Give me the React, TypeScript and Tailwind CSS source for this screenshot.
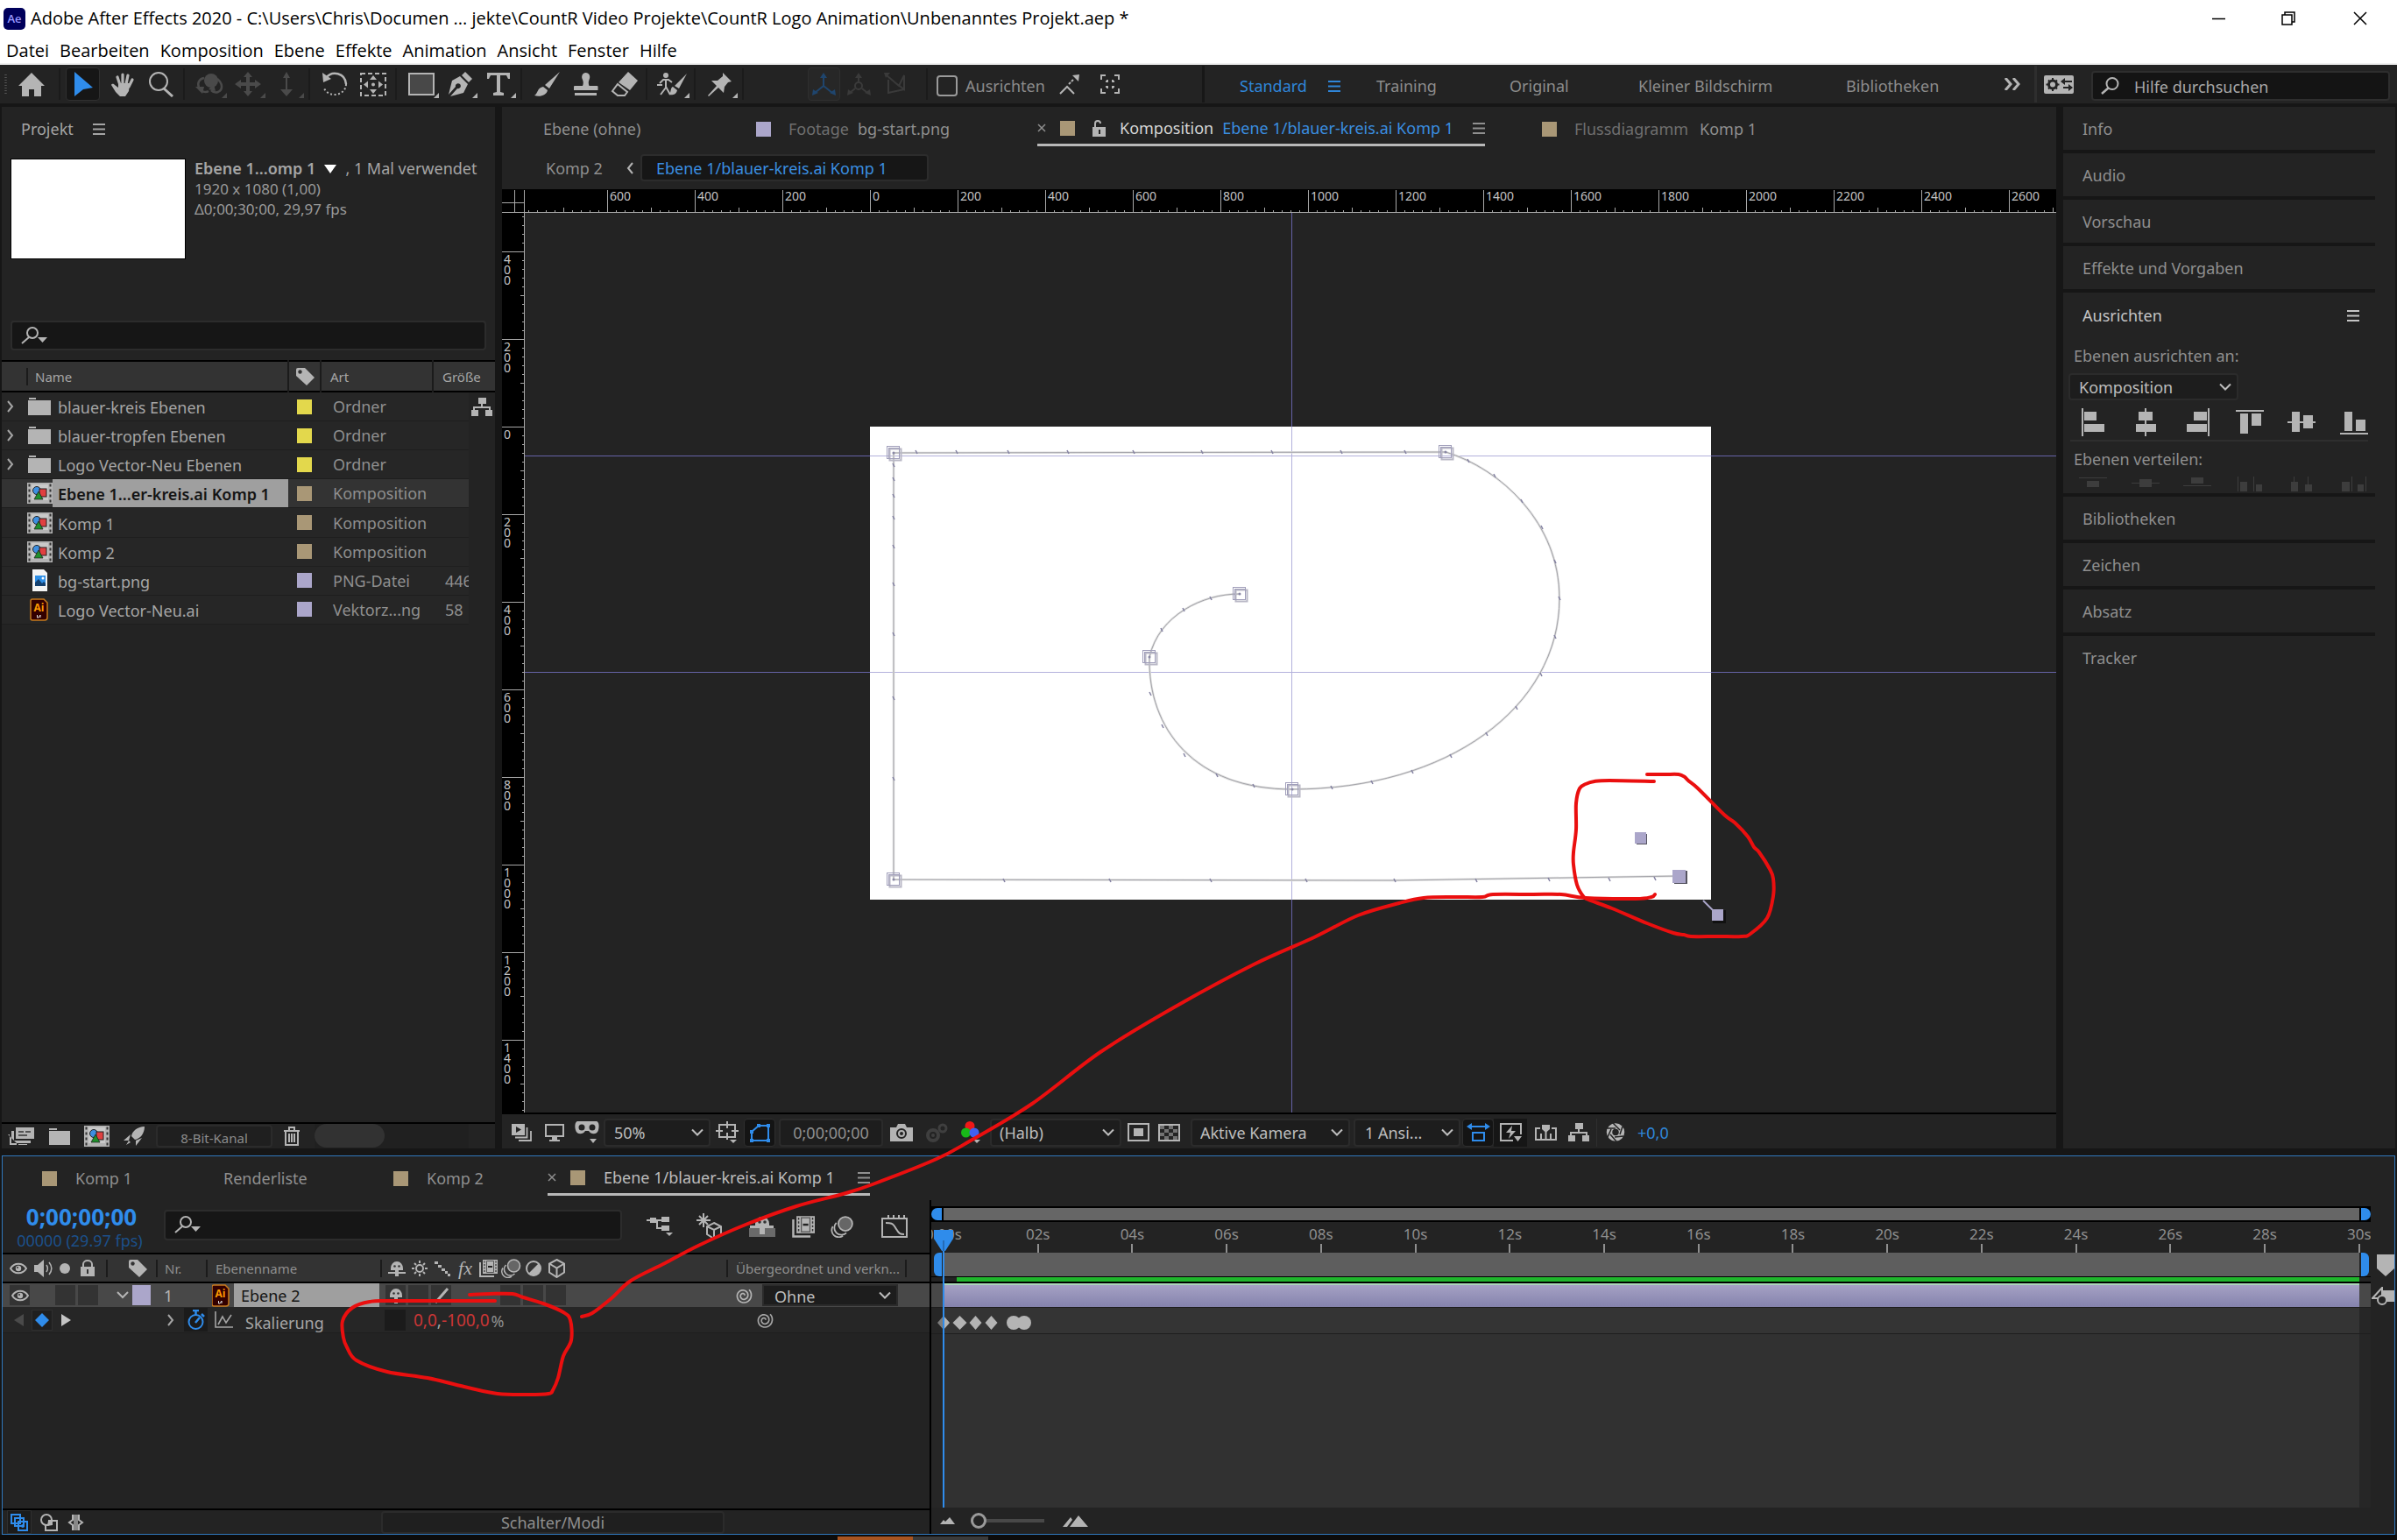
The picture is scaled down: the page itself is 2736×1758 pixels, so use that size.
import React from 'react';
import clsx from 'clsx';

interface IcProps {
  w: number;
  h: number;
  className?: string;
  children: React.ReactNode;
}

const Ic: React.FC<IcProps> = ({ w, h, className, children }) => (
  <svg width={w} height={h} viewBox={`0 0 ${w} ${h}`} fill="currentColor" className={clsx('shrink-0', className)} aria-hidden="true">
    {children}
  </svg>
);

const line = { fill: 'none', stroke: 'currentColor', strokeWidth: 2 };

/* ---------- shared icons ---------- */

const Burger = () => (
  <Ic w={14} h={13}><path d="M0 1h14M0 6.500h14M0 12h14" {...line} strokeWidth={1.800} /></Ic>
);
const Chevron: React.FC<{ className?: string }> = ({ className }) => (
  <Ic w={14} h={9} className={className}><path d="M1 1l6 6 6-6" {...line} /></Ic>
);
const ChevronRight = () => (
  <Ic w={8} h={14}><path d="M1 1l5 6-5 6" {...line} /></Ic>
);
const SearchDrop = () => (
  <Ic w={30} h={20}>
    <circle cx="13" cy="7" r="6" {...line} />
    <path d="M9 12l-8 7" {...line} />
    <path d="M19 12h11l-5.500 6z" />
  </Ic>
);
const CompIcon = () => (
  <Ic w={29} h={24}>
    <path d="M0 0h29v24H0z" fill="#b4b4b4" />
    <path d="M2.500 1.500v21M26.500 1.500v21" stroke="#333" strokeWidth="2" strokeDasharray="3 3" />
    <rect x="5" y="2" width="19" height="18" fill="#c9c9c9" />
    <circle cx="11" cy="9" r="4.500" fill="#3d8fe0" stroke="#222" />
    <rect x="14" y="7" width="8" height="9" fill="#e04040" stroke="#222" />
    <path d="M13 10l5 9H8z" fill="#1f8f2b" stroke="#222" strokeWidth=".8" />
  </Ic>
);
const FolderIcon = () => (
  <Ic w={26} h={20}><path d="M1 0h8v2H1zM0 3h26v17H0z" fill="#b4b4b4" /></Ic>
);
const PngIcon = () => (
  <Ic w={29} h={25}>
    <path d="M6 0h13l4 4v21H6z" fill="#f4f4f4" />
    <rect x="9" y="7" width="12" height="12" fill="#2f8fe6" />
    <path d="M9 19v-4l4-4 4 5 2-2 2 2v3z" fill="#14406f" />
    <circle cx="18" cy="10" r="1.500" fill="#fff" />
  </Ic>
);
const AiIcon: React.FC<{ w?: number }> = ({ w = 29 }) => (
  <svg width={w} height={26} viewBox={w === 29 ? '0 0 29 26' : '4 0 21 26'} className="shrink-0" aria-hidden="true">
    <path d="M6 1h13l4 4v17a3 3 0 01-3 3H6a2 2 0 01-2-2V3a2 2 0 012-2z" fill="#330000" stroke="#c77a1c" strokeWidth="1.500" />
    <text x="13.500" y="15" textAnchor="middle" fontSize="12" fontWeight="700" fill="#ff9a00" fontFamily="Open Sans, sans-serif">Ai</text>
    <path d="M11.500 19v3h1.500l2-3v3" stroke="#ddd" fill="none" />
  </svg>
);
const TagIcon = () => (
  <Ic w={22} h={21}>
    <path d="M1 3a2 2 0 012-2h8l11 11-9 9L1 10z" />
    <circle cx="5.500" cy="5.500" r="2.200" fill="#333" />
  </Ic>
);
const Flow = () => (
  <Ic w={24} h={21}><path d="M8 0h9v7H8zM0 14h8v7H0zM16 14h8v7h-8zM11 7h2v3h9v4h-2v-2H4v2H2v-4h9z" /></Ic>
);
const EyeIcon = () => (
  <Ic w={20} h={14}>
    <path d="M1 7c4-7 14-7 18 0-4 7-14 7-18 0z" {...line} />
    <circle cx="10" cy="7" r="3.200" />
    <circle cx="9" cy="6" r="1" fill="#333" />
  </Ic>
);
const ShyIcon = () => (
  <Ic w={22} h={18}>
    <path d="M4 9a7 8 0 0114 0v2h-5v7H9v-7H4z" />
    <path d="M1 14h20" {...line} />
    <circle cx="8.500" cy="6.500" r="1.300" fill="#333" />
    <circle cx="13.500" cy="6.500" r="1.300" fill="#333" />
  </Ic>
);
const BlurIcon: React.FC<{ w?: number; h?: number }> = ({ w = 23, h = 22 }) => (
  <svg width={w} height={h} viewBox="0 0 23 22" fill="none" stroke="currentColor" strokeWidth="1.600" className="shrink-0" aria-hidden="true">
    <circle cx="14.500" cy="8" r="7" fill="#666" />
    <path d="M5.500 7a7 7 0 0010 10" />
    <path d="M2 10.500a7 7 0 0010 9.500" />
  </svg>
);
const FrameBlendIcon: React.FC<{ w?: number; h?: number }> = ({ w = 22, h = 20 }) => (
  <svg width={w} height={h} viewBox="0 0 22 20" fill="currentColor" className="shrink-0" aria-hidden="true">
    <path d="M5 0h17v16H5z" />
    <path d="M7 1.500v13M20 1.500v13" stroke="#333" strokeWidth="1.200" strokeDasharray="2 1.500" />
    <path d="M9.500 1.500h8v13h-8z" fill="none" stroke="#555" />
    <path d="M11 8h5" stroke="#222" strokeWidth="2" />
    <path d="M2 3v16h16" {...line} />
  </svg>
);
const CubeIcon = () => (
  <Ic w={21} h={22}><path d="M10.500 1L19 5.500v10L10.500 21 2 15.500v-10zM2 5.500l8.500 5 8.500-5M10.500 10.500V21" {...line} /></Ic>
);

// spiral of the parent pick whip, wound inwards from its top right end
const spiral = Array.from({ length: 49 }, (_, i) => {
  const a = -0.8 + (i / 48) * Math.PI * 4.2;
  const r = 9.5 - (i / 48) * 8;
  return `${(10.5 + r * Math.cos(a)).toFixed(1)},${(10 + r * Math.sin(a)).toFixed(1)}`;
}).join(' ');

const Swirl = () => (
  <Ic w={21} h={20}><polyline points={spiral} {...line} strokeWidth={1.700} /></Ic>
);

const Square: React.FC<{ className: string }> = ({ className }) => (
  <span className={clsx('block h-[17px] w-[17px] shrink-0', className)} />
);

interface PickProps {
  label: string;
  value: string;
  className?: string;
  selectClass?: string;
}

const Pick: React.FC<PickProps> = ({ label, value, className, selectClass }) => (
  <div className={clsx('relative shrink-0', className)}>
    <select
      aria-label={label}
      defaultValue={value}
      className={clsx('h-full w-full appearance-none rounded border-2 border-[#2b2b2b] bg-[#1d1d1d] text-[#bdbdbd] outline-none', selectClass)}
    >
      <option>{value}</option>
    </select>
    <Chevron className="pointer-events-none absolute right-2 top-1/2 -translate-y-1/2 text-[#bdbdbd]" />
  </div>
);

/* ---------- title and menu ---------- */

const menus = ['Datei', 'Bearbeiten', 'Komposition', 'Ebene', 'Effekte', 'Animation', 'Ansicht', 'Fenster', 'Hilfe'];

const TitleBar = () => (
  <header className="border-b-2 border-[#f0f0f0] bg-white font-['Open_Sans',sans-serif] text-[20px] text-black">
    <div className="flex h-[42px] items-center pl-1">
      <svg width="25" height="25" viewBox="0 0 25 25" aria-hidden="true">
        <rect width="25" height="25" rx="5" fill="#00005b" />
        <text x="12.500" y="17" textAnchor="middle" fontSize="13" fontWeight="600" fill="#9999ff" fontFamily="Open Sans, sans-serif">Ae</text>
      </svg>
      <h1 className="ml-[6px]">
        Adobe After Effects 2020 - C:\Users\Chris\Documen ... jekte\CountR Video Projekte\CountR Logo Animation\Unbenanntes Projekt.aep *
      </h1>
      <div className="ml-auto flex">
        <button aria-label="Minimieren" className="flex h-[38px] w-20 items-center justify-center">
          <Ic w={15} h={15}><path d="M0 7.500h15" {...line} strokeWidth={1.500} /></Ic>
        </button>
        <button aria-label="Wiederherstellen" className="flex h-[38px] w-20 items-center justify-center">
          <Ic w={16} h={16}><path d="M1 4h11v11H1zM4 4V1h11v11h-3" {...line} strokeWidth={1.500} /></Ic>
        </button>
        <button aria-label="Schließen" className="flex h-[38px] w-[84px] items-center justify-center">
          <Ic w={16} h={16}><path d="M1 1l14 14M15 1L1 15" {...line} strokeWidth={1.500} /></Ic>
        </button>
      </div>
    </div>
    <nav className="flex h-[30px] gap-3 pl-[7px] leading-8">
      {menus.map(m => <button key={m}>{m}</button>)}
    </nav>
  </header>
);

/* ---------- toolbar ---------- */

const Tool: React.FC<{ label: string; fly?: boolean; className?: string; children: React.ReactNode }> = ({ label, fly, className, children }) => (
  <button aria-label={label} className={clsx('relative flex h-[38px] w-11 shrink-0 items-center justify-center', className)}>
    {children}
    {fly && (
      <svg width="6" height="6" viewBox="0 0 6 6" className="absolute bottom-[3px] right-[2px]" aria-hidden="true"><path d="M6 0v6H0z" fill="currentColor" /></svg>
    )}
  </button>
);

const Sep: React.FC<{ className?: string }> = ({ className }) => (
  <span className={clsx('ml-[3px] h-9 w-2 shrink-0 border-l-2 border-[#1b1b1b]', className)} />
);

const Toolbar = () => (
  <div className="flex h-11 shrink-0 items-center bg-[#232323] text-[#b4b4b4]">
    <Ic w={8} h={22}><path d="M6.500 0v22" stroke="#555" strokeWidth="2.500" strokeDasharray="1 2" /></Ic>
    <Tool label="Startseite" className="w-[56px]">
      <Ic w={30} h={27}><path d="M15 0l15 15h-4v12h-8v-8h-6v8H4V15H0z" /></Ic>
    </Tool>
    <Sep className="ml-0" />
    <Tool label="Auswahl" className="w-[39px] rounded border border-[#303030] bg-[#161616] text-[#2f8ceb]">
      <Ic w={22} h={28}><path d="M1 0l21 18-11 2-10 8z" /></Ic>
    </Tool>
    <Tool label="Hand" className="ml-1">
      <Ic w={28} h={28}>
        <path d="M11 15l-3-9M14 14V3M18 14l2-10M21 17l4-8" stroke="currentColor" strokeWidth="3.200" strokeLinecap="round" />
        <path d="M9 13h13l-1 9-4 6h-6l-5-5-5-8c1-2 3-1 4 0l4 3z" />
      </Ic>
    </Tool>
    <Tool label="Zoom">
      <Ic w={30} h={29}><circle cx="12" cy="11" r="10" {...line} /><path d="M18 19l10 9" {...line} strokeWidth={3} /></Ic>
    </Tool>
    <Sep />
    <Tool label="Kamera drehen" fly className="text-[#4a4a4a]">
      <Ic w={32} h={26}>
        <circle cx="18" cy="9" r="8" />
        <path d="M10 6C4 7 2 12 4 17s8 6 11 4M25 7c6 5 7 12 1 15-3 1-6 0-8-2" {...line} strokeWidth={2.500} />
        <path d="M0 16h10l-2 8zM21 13l2 8-8-2z" />
      </Ic>
    </Tool>
    <Tool label="Kamera schwenken" fly className="text-[#4a4a4a]">
      <Ic w={30} h={28}><path d="M15 0l5 6h-3v6h6V9l7 5-7 5v-3h-6v6h3l-5 6-5-6h3v-6H7v3l-7-5 7-5v3h6V6h-3z" /></Ic>
    </Tool>
    <Tool label="Kamera Dolly" fly className="text-[#4a4a4a]">
      <Ic w={18} h={28}><path d="M9 0l4 7h-3v13h6l-7 8-7-8h6V7H5z" /></Ic>
    </Tool>
    <Sep className="ml-0" />
    <Tool label="Drehen">
      <Ic w={30} h={28}>
        <path d="M5 7c7-9 22-6 23 7" {...line} strokeWidth={2.500} />
        <path d="M28 14c0 7-6 12-13 12-6 0-10-3-12-7" {...line} strokeDasharray="2 2.500" />
        <path d="M1 1l1 11 9-4z" />
      </Ic>
    </Tool>
    <Tool label="Ausschnitt">
      <Ic w={30} h={27}>
        <path d="M1 1h28v25H1z" {...line} strokeDasharray="5 3" />
        <path d="M15 3l4 5h-8zM15 24l4-5h-8zM4 13.500l5-4v8zM26 13.500l-5-4v8z" />
        <circle cx="15" cy="13.500" r="2" />
      </Ic>
    </Tool>
    <Sep />
    <Tool label="Rechteck" fly>
      <Ic w={30} h={26}><path d="M1 1h28v24H1z" fill="#484848" stroke="currentColor" strokeWidth="2" /></Ic>
    </Tool>
    <Tool label="Zeichenstift" fly>
      <Ic w={28} h={28}>
        <path d="M20 0l8 8-4 4-8-8zM14 5l9 9-5 10-15 4 8-9a3 3 0 10-2-2L1 26 5 10z" />
      </Ic>
    </Tool>
    <Tool label="Text" fly>
      <Ic w={26} h={26}><path d="M0 0h26v7h-2l-2-4h-7v19l4 1v3H7v-3l4-1V3H4L2 7H0z" /></Ic>
    </Tool>
    <Sep />
    <Tool label="Pinsel">
      <Ic w={29} h={28}><path d="M29 0L17 19l-5-4zM10 17l5 4c-1 6-9 8-15 6 4-2 3-9 10-10z" /></Ic>
    </Tool>
    <Tool label="Kopierstempel">
      <Ic w={29} h={27}><path d="M14.500 0c4 0 6 4 4 8-1 2-1 5 0 7h9a1 1 0 011 1v4H1v-4a1 1 0 011-1h9c1-2 1-5 0-7-2-4 0-8 3.500-8zM2 23h25v3H2z" /></Ic>
    </Tool>
    <Tool label="Radiergummi">
      <Ic w={31} h={28}>
        <path d="M20 0l11 10-9 11L9 12z" />
        <path d="M8 14l11 9-3 4H8l-6-5z" {...line} />
      </Ic>
    </Tool>
    <Sep />
    <Tool label="Roto-Pinsel" fly>
      <Ic w={34} h={27}>
        <circle cx="10" cy="3" r="3" />
        <path d="M3 12l4-4h6l4 3M10 8v9l-6 8M10 16l5 9M0 14h6" {...line} />
        <path d="M34 1l-9 17-5-3zM18 16l5 4c-1 5-6 6-9 5 2-2 1-8 4-9z" />
      </Ic>
    </Tool>
    <Sep />
    <Tool label="Marionette" fly>
      <Ic w={28} h={27}><path d="M17 0l10 10-4 1-4 5-1 7-6-6-11 10-1-1L10 15 4 9l7 0 6-5z" /></Ic>
    </Tool>
    <Sep className="ml-12" />
    <div className="ml-[67px] flex text-[#3a3a3a]">
      <Tool label="Lokale Achse" className="w-[37px] rounded border border-[#2f2f2f] bg-[#272727] text-[#1f456d]">
        <Ic w={27} h={26}><path d="M13 3v12L3 23M13 15l10 8" {...line} /><path d="M13 0l4 6H9zM0 26l1-7 6 4zM27 26l-1-7-6 4z" /></Ic>
      </Tool>
      <Tool label="Weltachse" className="w-[42px]">
        <Ic w={27} h={26}><path d="M13 3v8M9 18l-6 5M17 18l6 5" {...line} /><circle cx="13" cy="15" r="4" {...line} /><path d="M13 0l4 6H9zM0 26l1-7 6 4zM27 26l-1-7-6 4z" /></Ic>
      </Tool>
      <Tool label="Ansichtsachse" className="w-[42px]">
        <Ic w={26} h={26}><path d="M3 3l14 12 6-12v16l-8-6M5 8v15l18-4" {...line} /><path d="M0 0h7L2 6z" /></Ic>
      </Tool>
    </div>
    <Sep className="ml-[14px]" />
    <label className="ml-1 flex items-center gap-[9px] pt-1 text-[#8c8c8c]">
      <input type="checkbox" className="h-6 w-6 appearance-none rounded border-2 border-[#9a9a9a]" />
      Ausrichten
    </label>
    <Tool label="Kanten" className="ml-1 w-12">
      <Ic w={24} h={23}><path d="M1 22l8-8 8 8M11 11l2-2M14 8l2-2" {...line} /><path d="M23 0l-1 8-7-7z" /></Ic>
    </Tool>
    <Tool label="Einrasten" className="w-9">
      <Ic w={22} h={22}><path d="M1 6V1h5M16 1h5v5M21 16v5h-5M6 21H1v-5M8 6v2H6M14 6v2h2M8 16v-2H6M14 16v-2h2" {...line} /></Ic>
    </Tool>
    <nav className="ml-auto flex items-center text-[#8c8c8c]">
      <span className="mr-10 h-[42px] w-[3px] bg-[#171717]" />
      <button className="flex w-[156px] items-center pt-1 text-[#2f86d9]">
        <span className="w-[101px] text-left">Standard</span>
        <Burger />
      </button>
      <button className="w-[152px] pt-1 text-left">Training</button>
      <button className="w-[147px] pt-1 text-left">Original</button>
      <button className="w-[237px] pt-1 text-left">Kleiner Bildschirm</button>
      <button className="w-[181px] pt-1 text-left">Bibliotheken</button>
      <button aria-label="Weitere" className="w-[34px] text-[#b4b4b4]">
        <Ic w={18} h={14}><path d="M1 0l6 7-6 7M10 0l6 7-6 7" {...line} strokeWidth={3} /></Ic>
      </button>
    </nav>
    <span className="h-[42px] w-[3px] bg-[#2e2e2e]" />
    <button aria-label="Arbeitsbereiche" className="ml-2 w-[34px]">
      <Ic w={34} h={21}>
        <rect width="34" height="21" rx="2" />
        <circle cx="10" cy="10.500" r="4.500" fill="none" stroke="#232323" strokeWidth="3" />
        <path d="M10 3v3M10 15v3M2.500 10.500h3M14.500 10.500h3M5 5.500l2 2M15 5.500l-2 2M5 15.500l2-2M15 15.500l-2-2" stroke="#232323" strokeWidth="2" />
        <path d="M20 7h12M22 14h10" stroke="#232323" strokeWidth="2" />
        <path d="M24 3v8l-5-4zM28 10v8l5-4z" fill="#232323" />
      </Ic>
    </button>
    <div className="ml-5 mr-2 mt-1 flex h-[34px] w-[341px] items-center gap-[17px] rounded border-2 border-[#2e2e2e] bg-[#141414] pl-2">
      <Ic w={22} h={20}><circle cx="14" cy="7.500" r="6.500" {...line} /><path d="M10 12l-8 7" {...line} strokeWidth={2.500} /></Ic>
      <input aria-label="Hilfe durchsuchen" placeholder="Hilfe durchsuchen" className="min-w-0 flex-1 bg-transparent pt-[2px] outline-none placeholder:text-[#a8a8a8]" />
    </div>
  </div>
);

/* ---------- project panel ---------- */

const items = [
  { name: 'blauer-kreis Ebenen', kind: 'folder', color: 'bg-[#e3d84c]', type: 'Ordner', size: '' },
  { name: 'blauer-tropfen Ebenen', kind: 'folder', color: 'bg-[#e3d84c]', type: 'Ordner', size: '' },
  { name: 'Logo Vector-Neu Ebenen', kind: 'folder', color: 'bg-[#e3d84c]', type: 'Ordner', size: '' },
  { name: 'Ebene 1...er-kreis.ai Komp 1', kind: 'comp', color: 'bg-[#a99776]', type: 'Komposition', size: '', selected: true },
  { name: 'Komp 1', kind: 'comp', color: 'bg-[#a99776]', type: 'Komposition', size: '' },
  { name: 'Komp 2', kind: 'comp', color: 'bg-[#a99776]', type: 'Komposition', size: '' },
  { name: 'bg-start.png', kind: 'png', color: 'bg-[#aba6ca]', type: 'PNG-Datei', size: '446' },
  { name: 'Logo Vector-Neu.ai', kind: 'ai', color: 'bg-[#aba6ca]', type: 'Vektorz...ng', size: '58' },
];

const ProjectPanel = () => (
  <section className="flex w-[563px] shrink-0 flex-col bg-[#232323] text-[#a5a5a5]">
    <div className="flex h-[50px] items-center gap-[22px] pl-[22px]">
      <h2>Projekt</h2>
      <Burger />
    </div>
    <div className="mt-[9px] flex gap-[10px] pl-[10px]">
      <div className="h-[115px] w-[200px] border border-black bg-white" />
      <div className="text-[17px] leading-[23px]">
        <p className="flex items-center whitespace-nowrap text-[18px]">
          <b className="font-semibold">Ebene 1...omp 1</b>
          <Ic w={14} h={10} className="mx-[10px] text-white"><path d="M0 0h14L7 10z" /></Ic>
          , 1 Mal verwendet
        </p>
        <p className="text-[#9a9a9a]">1920 x 1080 (1,00)</p>
        <p className="text-[#9a9a9a]">Δ0;00;30;00, 29,97 fps</p>
      </div>
    </div>
    <div className="ml-[10px] mt-[70px] flex h-[34px] w-[543px] items-center rounded border-2 border-[#2c2c2c] bg-[#161616] pl-[10px] text-[#b4b4b4]">
      <SearchDrop />
      <input aria-label="Projekt durchsuchen" className="min-w-0 flex-1 bg-transparent outline-none" />
    </div>
    <table className="mt-[11px] h-[302px] w-full table-fixed border-collapse">
      <colgroup>
        <col className="w-[327px]" /><col className="w-[37px]" /><col className="w-[128px]" /><col className="w-[41px]" /><col />
      </colgroup>
      <thead>
        <tr className="h-[35px] border-y-2 border-black bg-[#333] text-left text-[15px] text-[#a5a5a5]">
          <th className="font-normal"><span className="ml-7 border-l-2 border-[#1b1b1b] pl-2">Name</span></th>
          <th className="border-x-2 border-[#1b1b1b] text-[#b4b4b4]"><span className="flex justify-center"><TagIcon /></span></th>
          <th className="border-r-2 border-[#1b1b1b] pl-[10px] font-normal">Art</th>
          <th colSpan={2} className="pl-[10px] font-normal">Größe</th>
        </tr>
      </thead>
      <tbody>
        {items.map((it, i) => (
          <tr key={it.name} className={clsx('h-[33px]', it.selected ? 'bg-[#333]' : 'bg-[#262626]')}>
            <td className="border-b border-[#1e1e1e] p-0">
              <div className="flex h-8 items-center whitespace-nowrap">
                <span className="w-7 shrink-0 pl-[6px]">{it.kind === 'folder' && <ChevronRight />}</span>
                <span className="flex w-[30px] shrink-0 justify-center">
                  {it.kind === 'folder' && <FolderIcon />}
                  {it.kind === 'comp' && <CompIcon />}
                  {it.kind === 'png' && <PngIcon />}
                  {it.kind === 'ai' && <AiIcon />}
                </span>
                <span className={clsx('h-full flex-1 pl-[6px] leading-[34px]', it.selected && 'bg-[#9f9f9f] font-semibold text-[#141414]')}>{it.name}</span>
              </div>
            </td>
            <td className="border-b border-[#1e1e1e] p-0"><Square className={clsx('mx-auto', it.color)} /></td>
            <td className="border-b border-[#1e1e1e] p-0 pl-[14px] leading-8 text-[#8f8f8f]">{it.type}</td>
            <td className="overflow-hidden border-b border-[#1e1e1e] p-0 pl-[14px] text-[#8f8f8f]">{it.size}</td>
            <td className="bg-[#232323] p-0 pl-[3px] text-[#b4b4b4]">{i === 0 && <Flow />}</td>
          </tr>
        ))}
      </tbody>
    </table>
    <div className="mt-auto flex h-[30px] items-center border-t-2 border-black pl-[7px] text-[#b4b4b4]">
      <button aria-label="Interpretieren" className="w-[47px]">
        <Ic w={30} h={20}><path d="M9 0h21v13H9zM4 4h3v11h19v3H4zM0 8h2v12h8v-2M12 19h10v1H12z" /><path d="M12 5h6M20 5h6M12 9h10" stroke="#333" strokeWidth="1.500" /></Ic>
      </button>
      <button aria-label="Neuer Ordner" className="w-10"><Ic w={24} h={19}><path d="M0 0h9v2H0zM0 3h24v16H0z" /></Ic></button>
      <button aria-label="Neue Komposition" className="w-[45px]"><CompIcon /></button>
      <button aria-label="Projekteinstellungen" className="w-[37px]">
        <Ic w={24} h={22}><path d="M24 0c-8 0-14 5-15 11l4 4c6-1 11-7 11-15zM8 9l-8 7h6zM14 16v6l7-9zM6 16l-3 5 5-3z" /></Ic>
      </button>
      <button className="h-[26px] w-[133px] rounded border-2 border-[#2b2b2b] bg-[#1f1f1f] pt-1 text-[15px] leading-none text-[#8c8c8c]">8-Bit-Kanal</button>
      <button aria-label="Löschen" className="ml-[12px] w-9">
        <Ic w={20} h={22}><path d="M1 5h18M7 4V1h6v3M3 6v15h14V6M7 8v10M10 8v10M13 8v10" {...line} /></Ic>
      </button>
      <div className="h-full w-[176px] bg-[#202020]"><div className="h-[27px] w-20 rounded-full bg-[#323232]" /></div>
    </div>
  </section>
);

/* ---------- composition viewer ---------- */

const hTicks = Array.from({ length: 17 }, (_, i) => (i - 3) * 200);
const vTicks = Array.from({ length: 10 }, (_, i) => (i - 2) * 200);

const HRuler = () => (
  <svg className="block h-full w-full" aria-hidden="true">
    <svg x="50%" y="0" overflow="visible" shapeRendering="crispEdges">
      <path d="M-880 24H1100" stroke="#a8a8a8" strokeWidth="3" strokeDasharray="1 9" />
      <path d="M-930 23H1100" stroke="#a8a8a8" strokeWidth="6" strokeDasharray="1 49" />
      {hTicks.map(t => (
        <g key={t}>
          <path d={`M${t / 2 - 480 + 0.5} 0v26`} stroke="#a8a8a8" />
          <text x={t / 2 - 480 + 3} y="12" fontSize="14" fill="#c4c4c4">{Math.abs(t)}</text>
        </g>
      ))}
      <path d="M-1400 25.500H1400" stroke="#a8a8a8" />
    </svg>
  </svg>
);

const VRuler = () => (
  <svg className="block h-full w-full" aria-hidden="true">
    <svg x="0" y="50%" overflow="visible" shapeRendering="crispEdges">
      <path d="M24 -570V600" stroke="#a8a8a8" strokeWidth="3" strokeDasharray="1 9" />
      <path d="M23 -570V600" stroke="#a8a8a8" strokeWidth="5" strokeDasharray="1 49" />
      {vTicks.map(t => (
        <g key={t}>
          <path d={`M0 ${t / 2 - 270 + 0.5}h26`} stroke="#a8a8a8" />
          <text y={t / 2 - 270 + 2} fontSize="14" fill="#c4c4c4">
            {String(Math.abs(t)).split('').map((c, i) => <tspan key={i} x="2" dy="12">{c}</tspan>)}
          </text>
        </g>
      ))}
      <path d="M25.500 -900V900" stroke="#a8a8a8" />
    </svg>
  </svg>
);

const motionPath = 'M422 191C380 191 330 215 319 263C317 345 370 414 482 414C660 414 787 320 787 196C787 110 720 48 657 29L27 30V517L600 518L924 513';
const keys = [[27, 30], [657, 29], [27, 517], [422, 191], [319, 263], [482, 414]];
const dots = [
  [53, 29], [99, 29], [158, 29], [226, 29], [301, 29], [379, 29], [459, 29], [538, 29], [611, 29],
  [27, 44], [27, 60], [27, 79], [27, 104], [27, 137], [27, 180], [27, 237], [27, 310], [27, 402],
  [153, 518], [274, 518], [389, 518], [498, 518], [599, 518], [692, 518], [775, 517], [844, 517], [896, 516],
  [683, 39], [713, 56], [744, 85], [767, 115], [782, 154], [787, 196], [782, 240], [766, 283], [738, 321], [704, 351],
  [663, 376], [619, 394], [573, 406], [527, 412], [389, 196], [358, 209], [333, 232], [320, 305], [334, 342], [359, 375], [396, 398], [438, 410],
];

const Viewer = () => (
  <div className="relative flex min-w-0 flex-1 items-center justify-center overflow-hidden">
    <svg width="960" height="540" viewBox="0 0 960 540" overflow="visible" className="shrink-0" aria-hidden="true">
      <path d="M-1200 33.500H2200M-1200 280.500H2200M481.500 -900V1200" stroke="#6562a6" strokeWidth="1" shapeRendering="crispEdges" />
      <rect width="960" height="540" fill="#fff" />
      <path d="M0 33.500H960M0 280.500H960M481.500 0V540" stroke="#b3b1dc" strokeWidth="1" shapeRendering="crispEdges" />
      <path d={motionPath} fill="none" stroke="#e0e0e0" strokeWidth="2.500" />
      <path d={motionPath} fill="none" stroke="#a2a2a8" strokeWidth="1" />
      {dots.map(([x, y]) => <path key={`${x}-${y}`} d={`M${x - 1} ${y - 2}l2 4`} stroke="#8583a3" strokeWidth="1.500" />)}
      {keys.map(([x, y]) => (
        <g key={`${x}-${y}`} fill="none">
          <rect x={x - 4.500} y={y - 4.500} width="13" height="13" stroke="#b9b8c6" strokeWidth="2" />
          <rect x={x - 7.500} y={y - 7.500} width="14" height="14" stroke="#a09eba" />
          <rect x={x - 5.500} y={y - 5.500} width="12" height="12" stroke="#a09eba" />
          <circle cx={x} cy={y} r="1.500" fill="#8a88a6" />
        </g>
      ))}
      <path d="M951 541l12 12" stroke="#aba6ca" strokeWidth="2" />
      <path d="M875 465h12v12h-12zM918 507h15v15h-15z" fill="#55535f" />
      <path d="M962 552h15v15h-15z" fill="#111" />
      <path d="M873 463h13v13h-13zM916 506h15v15h-15zM961 551h13v13h-13z" fill="#aba6ca" />
    </svg>
  </div>
);

const barIcon = 'flex h-8 shrink-0 items-center justify-center';

const ViewerBar = () => (
  <div className="flex h-[41px] shrink-0 items-center border-t-2 border-black pt-[2px] text-[#b4b4b4]">
    <button aria-label="Vorschau" className={clsx(barIcon, 'ml-1 w-[38px]')}>
      <Ic w={24} h={20}><path d="M0 0h15v13H0z" /><path d="M5 3v7l6-3.500z" fill="#232323" /><path d="M4 15.500h13.500V4M8 19h14V8" {...line} strokeWidth={1.800} /></Ic>
    </button>
    <button aria-label="Monitor" className={clsx(barIcon, 'w-9')}>
      <Ic w={22} h={20}><path d="M1 1h20v13H1z" {...line} /><path d="M8 15h6v3h3v2H5v-2h3z" /></Ic>
    </button>
    <button aria-label="Maske" className={clsx(barIcon, 'w-[38px]')}>
      <Ic w={28} h={25}><path d="M3 0h22c3 1 3 6 2 10-1 5-8 6-11 1h-4C9 16 2 15 1 10 0 6 0 1 3 0zM17 20h8l-4 5z" /><circle cx="8" cy="7" r="3.500" fill="#232323" /><circle cx="20" cy="7" r="3.500" fill="#232323" /></Ic>
    </button>
    <Pick label="Vergrößerung" value="50%" className="h-8 w-[122px]" selectClass="pl-[10px]" />
    <button aria-label="Raster" className={clsx(barIcon, 'w-[38px]')}>
      <Ic w={26} h={25}><path d="M4 4h18v14H4zM13 0v8M13 13v8M0 11h8M18 11h8" {...line} /><path d="M16 21h8l-4 4z" /></Ic>
    </button>
    <button aria-label="Masken anzeigen" className={clsx(barIcon, 'w-9 rounded border border-[#2f2f2f] bg-[#141414] text-[#2f8ceb]')}>
      <Ic w={25} h={22}><path d="M3 20V10l8-7h11v17z" {...line} /><path d="M1 18h4v4H1zM20 18h4v4h-4zM20 1h4v4h-4zM9 1h4v4H9zM1 8h4v4H1z" /></Ic>
    </button>
    <button className="ml-1 h-8 w-[119px] shrink-0 rounded border-2 border-[#2b2b2b] bg-[#1d1d1d] text-[#8f8f8f]">0;00;00;00</button>
    <button aria-label="Schnappschuss" className={clsx(barIcon, 'w-[42px]')}>
      <Ic w={26} h={20}><path d="M0 4h7l2-4h8l2 4h7v16H0z" /><circle cx="13" cy="11" r="5" fill="none" stroke="#232323" strokeWidth="2" /><circle cx="13" cy="11" r="2" fill="#232323" /></Ic>
    </button>
    <button aria-label="Schnappschuss anzeigen" className={clsx(barIcon, 'w-9 text-[#3f3f3f]')}>
      <Ic w={27} h={22}><circle cx="10" cy="14" r="6" {...line} strokeWidth={4} /><circle cx="10" cy="14" r="2" /><circle cx="21" cy="6" r="4" {...line} strokeWidth={3} /></Ic>
    </button>
    <button aria-label="Kanäle" className={clsx(barIcon, 'w-11')}>
      <Ic w={22} h={25}><circle cx="10" cy="5.500" r="5.500" fill="#f01818" /><circle cx="5.500" cy="13" r="5.500" fill="#18b818" /><circle cx="15" cy="13" r="5.500" fill="#4060f0" /><path d="M14 21h8l-4 4z" /></Ic>
    </button>
    <Pick label="Auflösung" value="(Halb)" className="h-8 w-[150px]" selectClass="pl-[9px]" />
    <button aria-label="Relevanter Bereich" className={clsx(barIcon, 'w-[38px]')}>
      <Ic w={25} h={21}><path d="M1 1h23v19H1z" {...line} /><path d="M7 6h11v9H7z" /></Ic>
    </button>
    <button aria-label="Transparenzraster" className={clsx(barIcon, 'mr-2 w-[33px]')}>
      <Ic w={25} h={20}><path d="M1 1h23v18H1z" {...line} /><path d="M2 2h5v4H2zM12 2h5v4h-5zM7 6h5v4H7zM17 6h5v4h-5zM2 10h5v4H2zM12 10h5v4h-5zM7 14h5v4H7zM17 14h5v4h-5z" opacity=".55" /></Ic>
    </button>
    <Pick label="Kamera" value="Aktive Kamera" className="h-8 w-[182px]" selectClass="pl-[9px]" />
    <Pick label="Ansichten" value="1 Ansi..." className="ml-1 h-8 w-[122px]" selectClass="pl-[11px]" />
    <button aria-label="Pixelseitenverhältnis" className={clsx(barIcon, 'ml-[2px] w-9 rounded border border-[#2f2f2f] bg-[#141414] text-[#2f8ceb]')}>
      <Ic w={27} h={21}><path d="M3 4h21M7 11h13v9H7z" {...line} /><path d="M0 4l6-4v8zM27 4l-6-4v8z" /></Ic>
    </button>
    <button aria-label="Schnelle Vorschau" className={clsx(barIcon, 'w-[38px] bg-[#161616]')}>
      <Ic w={25} h={21}><path d="M24 13V1H1v19h14" {...line} /><path d="M14 3l-7 8h5l-2 7 8-9h-5zM16 15h9l-4.500 6z" /></Ic>
    </button>
    <button aria-label="Zeitleiste" className={clsx(barIcon, 'w-[42px]')}>
      <Ic w={25} h={18}><path d="M6 4H1v13h23V4h-5M7 16v-6M12.500 16V8M18 16v-6" {...line} /><path d="M8 0h9v5l-4.500 4L8 5z" /></Ic>
    </button>
    <button aria-label="Flussdiagramm" className={clsx(barIcon, 'w-[38px] border-r border-[#2e2e2e] pr-1')}><Flow /></button>
    <button aria-label="Belichtung" className={clsx(barIcon, 'w-[42px]')}>
      <Ic w={22} h={21}><circle cx="11" cy="10.500" r="7" {...line} strokeWidth={6.500} /><path d="M8 0l8 8M19 4l-3 9M20 15l-10 1M12 21l-7-8M2 16l4-9M1 6h10" stroke="#232323" strokeWidth="1.500" /></Ic>
    </button>
    <span className="ml-1 text-[#2f86d9]">+0,0</span>
  </div>
);

const CompPanel = () => (
  <section className="flex min-w-0 flex-1 flex-col bg-[#232323] text-[#8f8f8f]">
    <div className="flex h-[50px] shrink-0 whitespace-nowrap pl-[47px] leading-[50px]">
      <button className="w-[243px] text-left">Ebene (ohne)</button>
      <button className="flex w-[321px] items-center gap-5">
        <Square className="bg-[#aba6ca]" />
        <span className="text-[#6f6f6f]">Footage<span className="ml-[10px] text-[#8f8f8f]">bg-start.png</span></span>
      </button>
      <div className="flex h-[45px] w-[511px] items-center border-b-[3px] border-[#b8b8b8] pt-[6px]">
        <button aria-label="Schließen"><Ic w={10} h={10}><path d="M1 1l8 8M9 1L1 9" {...line} strokeWidth={1.500} /></Ic></button>
        <Square className="ml-4 bg-[#a99776]" />
        <Ic w={16} h={19} className="ml-[19px] text-[#b4b4b4]"><path d="M1 8h15v11H1z" /><path d="M4 8V4a3 3 0 016 0" {...line} /><path d="M8 11h2v5H8z" fill="#232323" /></Ic>
        <span className="ml-4 text-[#d6d6d6]">Komposition<span className="ml-[10px] text-[#3a8ee0]">Ebene 1/blauer-kreis.ai Komp 1</span></span>
        <span className="ml-auto"><Burger /></span>
      </div>
      <button className="ml-[65px] flex items-center gap-5">
        <Square className="bg-[#a99776]" />
        <span className="text-[#6f6f6f]">Flussdiagramm<span className="ml-[13px] text-[#8f8f8f]">Komp 1</span></span>
      </button>
    </div>
    <div className="flex h-[44px] shrink-0 items-center whitespace-nowrap pb-[5px] pl-[50px]">
      <button className="w-[92px] text-left">Komp 2</button>
      <Ic w={8} h={14} className="mr-2 text-[#b4b4b4]"><path d="M7 1L2 7l5 6" {...line} /></Ic>
      <button className="h-[31px] w-[329px] rounded border-2 border-[#2c2c2c] bg-[#161616] pl-4 text-left leading-none text-[#3a8ee0]">Ebene 1/blauer-kreis.ai Komp 1</button>
    </div>
    <div className="flex h-[27px] shrink-0 border-t border-black bg-black">
      <Ic w={26} h={26}><path d="M14.500 0v26M0 14.500h26M25.500 0v26M0 25.500h26" stroke="#a8a8a8" /></Ic>
      <div className="min-w-0 flex-1"><HRuler /></div>
    </div>
    <div className="flex min-h-0 flex-1">
      <div className="w-[26px] shrink-0 bg-black"><VRuler /></div>
      <Viewer />
    </div>
    <ViewerBar />
  </section>
);

/* ---------- right column ---------- */

const alignIcons = [
  { label: 'Links', d: 'M3 0h2v32H3zM6 4h14v10H6zM6 18h23v9H6z' },
  { label: 'Zentriert', d: 'M15 0h2v32h-2zM8 4h16v10H8zM5 18h23v9H5z' },
  { label: 'Rechts', d: 'M28 0h2v32h-2zM12 4h15v10H12zM4 18h23v9H4z' },
  { label: 'Oben', d: 'M0 2h32v2H0zM5 6h9v23H5zM18 6h11v14H18z' },
  { label: 'Mitte', d: 'M0 15h32v2H0zM5 4h9v23H5zM18 8h11v15H18z' },
  { label: 'Unten', d: 'M0 28h32v2H0zM5 4h9v22H5zM18 13h11v13H18z' },
];

const spreadIcons = [
  { label: 'Oben verteilen', d: 'M0 1h32v1H0zM9 5h14v7H9z' },
  { label: 'Vertikal verteilen', d: 'M0 7h32v1H0zM9 3h14v9H9z' },
  { label: 'Unten verteilen', d: 'M0 10h32v1H0zM9 1h14v7H9z' },
  { label: 'Links verteilen', d: 'M2 0h1v17H2zM5 6h8v11H5zM20 0h1v17h-1zM23 9h7v8h-7z' },
  { label: 'Horizontal verteilen', d: 'M7 0h1v6h4v11H4V6h3zM23 0h1v9h4v8h-8V9h3z' },
  { label: 'Rechts verteilen', d: 'M2 6h9v11H2zM13 0h1v17h-1zM20 9h7v8h-7zM29 0h1v17h-1z' },
];

const side = 'block h-[53px] w-full border-b-4 border-[#161616] pl-[22px] text-left';

const SidePanel = () => (
  <aside className="w-[379px] shrink-0 bg-[#232323] pr-[23px] text-[#8f8f8f]">
    {['Info', 'Audio', 'Vorschau', 'Effekte und Vorgaben'].map(t => <button key={t} className={side}>{t}</button>)}
    <section className="h-[233px] border-b-4 border-[#161616]">
      <div className="flex h-[52px] items-center justify-between pl-[22px] pr-[18px] text-[#c4c4c4]">
        <h2>Ausrichten</h2>
        <Burger />
      </div>
      <p className="pl-3 leading-[40px]">Ebenen ausrichten an:</p>
      <Pick label="Ebenen ausrichten an" value="Komposition" className="ml-[6px] h-[31px] w-[194px]" selectClass="pl-[10px]" />
      <div className="mx-2 mt-[9px] flex h-[38px] justify-between border-b-2 border-[#2e2e2e] pl-[10px] text-[#b4b4b4]">
        {alignIcons.map(a => <button key={a.label} aria-label={a.label} className="flex"><Ic w={32} h={32}><path d={a.d} /></Ic></button>)}
      </div>
      <p className="pl-3 leading-[40px]">Ebenen verteilen:</p>
      <div className="mx-2 flex justify-between pl-[10px] text-[#3d3d3d]">
        {spreadIcons.map(a => <button key={a.label} aria-label={a.label} className="flex"><Ic w={32} h={17}><path d={a.d} /></Ic></button>)}
      </div>
    </section>
    {['Bibliotheken', 'Zeichen', 'Absatz'].map(t => <button key={t} className={side}>{t}</button>)}
    <button className="h-[53px] pb-1 pl-[22px] text-left">Tracker</button>
  </aside>
);

/* ---------- timeline ---------- */

const cell = 'mr-[3px] flex h-[23px] w-[23px] shrink-0 items-center justify-center bg-[#333]';
const head = 'flex h-5 shrink-0 items-center border-l-2 border-[#1b1b1b]';
const seconds = ['0:00s', '02s', '04s', '06s', '08s', '10s', '12s', '14s', '16s', '18s', '20s', '22s', '24s', '26s', '28s', '30s'];

const LayerColumn = () => (
  <div className="flex w-[1060px] shrink-0 flex-col border-r-2 border-black">
    <div className="flex h-[60px] shrink-0 items-center">
      <div className="w-[184px] pt-1 text-center">
        <p className="pr-1 text-[26px] font-bold leading-[28px] text-[#2f8ceb]">0;00;00;00</p>
        <p className="whitespace-nowrap pr-2 text-[18px] leading-[26px] text-[#1c508a]">00000 (29.97 fps)</p>
      </div>
      <div className="mb-1 flex h-[35px] w-[523px] items-center rounded border-2 border-[#2c2c2c] bg-[#161616] pl-[10px] text-[#b4b4b4]">
        <SearchDrop />
        <input aria-label="Ebenen durchsuchen" className="min-w-0 flex-1 bg-transparent outline-none" />
      </div>
      <div className="flex items-center pl-[14px] text-[#b4b4b4]">
        <button aria-label="Mini-Flussdiagramm" className="flex w-[58px] justify-center">
          <Ic w={30} h={22}><path d="M0 4h18M12 4v9h7" {...line} /><path d="M4 1h7v6H4zM17 0h9v6h-9zM17 10h9v6h-9zM22 18h8l-4 4z" /></Ic>
        </button>
        <button aria-label="3D-Entwurf" className="flex w-[58px] justify-center">
          <Ic w={32} h={30}><path d="M8 0v16M0 8h16M3 3l10 10M13 3L3 13" {...line} /><path d="M20 11l8 4v9l-8 5-8-5v-9zM12 15l8 4 8-4M20 19v10" {...line} /></Ic>
        </button>
        <button aria-label="Shy" className="flex w-[60px] justify-center">
          <Ic w={30} h={24}><path d="M0 14h30v10H0z" fill="#6a6a6a" /><path d="M7 9a8 8 0 0116 0v2h5v3H18v7h-6v-7H1v-3h6z" /><circle cx="12" cy="7" r="1.800" fill="#333" /><circle cx="18" cy="7" r="1.800" fill="#333" /></Ic>
        </button>
        <button aria-label="Frame-Überblendung" className="flex w-8 justify-center"><FrameBlendIcon w={27} h={25} /></button>
        <button aria-label="Bewegungsunschärfe" className="flex w-[58px] justify-center"><BlurIcon w={27} h={25} /></button>
        <button aria-label="Diagrammeditor" className="flex w-[62px] justify-center">
          <Ic w={31} h={26}><path d="M1 4h28v21H1zM8 0v4M14 0v4M20 0v4M26 0v4" {...line} /><path d="M5 9c9 0 9 2 12 7s4 6 9 6" {...line} /></Ic>
        </button>
      </div>
    </div>
    <div className="flex h-[35px] shrink-0 items-center border-y-2 border-black bg-[#333] pl-2 text-[15px] text-[#8f8f8f]">
      <div className="flex w-[110px] items-center text-[#b4b4b4]">
        <EyeIcon />
        <Ic w={21} h={20} className="ml-2"><path d="M0 6h4l7-6v20l-7-6H0z" /><path d="M14 6c2 3 2 5 0 8M17 3c4 5 4 9 0 14" {...line} strokeWidth={1.500} /></Ic>
        <Ic w={12} h={12} className="ml-2"><circle cx="6" cy="6" r="6" /></Ic>
        <Ic w={16} h={19} className="ml-3"><path d="M0 8h16v11H0z" /><path d="M3 8V5a5 4 0 0110 0v3" {...line} /><path d="M7 11h2v5H7z" fill="#333" /></Ic>
      </div>
      <div className={clsx(head, 'w-[57px] justify-center pl-3 text-[#b4b4b4]')}><TagIcon /></div>
      <div className={clsx(head, 'w-[57px] pl-2')}>Nr.</div>
      <div className={clsx(head, 'w-[199px] pl-[9px]')}>Ebenenname</div>
      <div className={clsx(head, 'w-[395px] pl-1 text-[#b4b4b4]')}>
        <span className="flex w-[26px] justify-center"><ShyIcon /></span>
        <span className="flex w-[26px] justify-center"><Ic w={18} h={18}><circle cx="9" cy="9" r="4" {...line} /><path d="M9 0v3M9 15v3M0 9h3M15 9h3M3 3l2 2M15 3l-2 2M3 15l2-2M15 15l-2-2" {...line} /></Ic></span>
        <span className="flex w-[26px] justify-center"><Ic w={18} h={18}><path d="M0 1h4v3H0zM4 5h4v3H4zM8 9h4v3H8zM12 12h3v3h-3zM15 15h3v3h-3z" /></Ic></span>
        <span className="flex w-[26px] justify-center font-['Liberation_Serif',serif] text-[22px] italic leading-5">fx</span>
        <span className="flex w-[26px] justify-center"><FrameBlendIcon /></span>
        <span className="flex w-[26px] justify-center"><BlurIcon /></span>
        <span className="flex w-[26px] justify-center"><Ic w={18} h={18}><circle cx="9" cy="9" r="8" {...line} /><path d="M15 3a8 8 0 01-12 12z" /></Ic></span>
        <span className="flex w-[26px] justify-center"><CubeIcon /></span>
      </div>
      <div className={clsx(head, 'w-[204px] whitespace-nowrap pl-[9px]')}>Übergeordnet und verkn...</div>
      <div className={head} />
    </div>
    <div className="flex h-[27px] shrink-0 items-center bg-[#484848] pl-2 text-[#b4b4b4]">
      <button aria-label="Ebene anzeigen" className={cell}><EyeIcon /></button>
      <span className="w-[26px]" />
      <span className={cell} />
      <span className={cell} />
      <span className="flex w-[36px] justify-end pr-1"><Chevron /></span>
      <span className="h-[23px] w-[21px] bg-[#aba6ca]" />
      <span className="w-[70px] pl-[15px]">1</span>
      <AiIcon w={21} />
      <span className="ml-1 h-full w-[166px] bg-[#9f9f9f] pl-2 leading-[29px] text-[#141414]">Ebene 2</span>
      <span className="ml-[7px] flex">
        <span className={cell}><ShyIcon /></span>
        <span className={cell} />
        <span className={cell}><Ic w={18} h={18}><path d="M16 1L2 17" {...line} strokeWidth={3} /></Ic></span>
        <span className="w-[53px]" />
        <span className={cell} />
        <span className={cell} />
        <span className={cell} />
      </span>
      <span className="ml-auto flex w-[223px] items-center gap-[11px]">
        <Swirl />
        <Pick label="Übergeordnete Ebene" value="Ohne" className="h-[25px] w-[155px]" selectClass="rounded-none border-0 pl-3" />
      </span>
    </div>
    <div className="flex h-[30px] shrink-0 items-center border-b border-[#1e1e1e] bg-[#262626] pl-[13px] text-[#a5a5a5]">
      <Ic w={11} h={14} className="text-[#4a4a4a]"><path d="M11 0v14L0 7z" /></Ic>
      <button aria-label="Keyframe" className="ml-[9px] flex h-6 w-6 items-center justify-center border border-[#2f2f2f] bg-[#1f1f1f] text-[#2f8ceb]"><Ic w={16} h={16}><path d="M8 0l8 8-8 8-8-8z" /></Ic></button>
      <Ic w={11} h={14} className="ml-[10px] text-[#c4c4c4]"><path d="M0 0l11 7-11 7z" /></Ic>
      <span className="ml-[110px]"><ChevronRight /></span>
      <button aria-label="Stoppuhr" className="ml-[11px] flex h-[27px] w-[27px] items-center justify-center bg-[#1b1b1b] text-[#2f8ceb]">
        <Ic w={21} h={23}><circle cx="10.500" cy="14" r="8" {...line} /><path d="M7 1h7M10.500 1v5M17 5l3 3M10 15l5-6" {...line} strokeWidth={2.500} /></Ic>
      </button>
      <Ic w={21} h={20} className="ml-2"><path d="M1 0v18h20M4 15l5-9 4 7 6-9" {...line} strokeWidth={1.600} /></Ic>
      <span className="ml-[14px] w-[159px] pt-[6px]">Skalierung</span>
      <span className="h-6 w-6 bg-[#1b1b1b]" />
      <span className="ml-[9px] text-[19px] text-[#c93636]">0,0<span className="text-[#a5a5a5]">,</span>-100,0</span>
      <span className="ml-[2px] pt-[2px] text-[#8f8f8f]">%</span>
      <span className="ml-auto mr-[178px]"><Swirl /></span>
    </div>
    <div className="flex-1" />
    <div className="flex h-[29px] shrink-0 items-center border-t-2 border-black pl-[5px] text-[#b4b4b4]">
      <button aria-label="Ebenenschalter" className="flex h-[27px] w-7 items-center justify-center border border-[#2f2f2f] bg-[#1b1b1b] text-[#2f8ceb]">
        <Ic w={20} h={20}><path d="M1 1h10v10H1zM5 5h10v9H5zM9 9h10v10H9z" fill="#1b1b1b" stroke="currentColor" strokeWidth="2" /><circle cx="14" cy="14" r="2" /></Ic>
      </button>
      <button aria-label="Modi" className="ml-[10px]"><Ic w={20} h={20}><circle cx="7" cy="7" r="6" {...line} /><path d="M9 8h10v11H6v-6" {...line} /><path d="M9 8h5v5l-6 1z" /></Ic></button>
      <button aria-label="In/Out" className="ml-[10px]"><Ic w={21} h={20}><path d="M7 1v6l-4 3 4 3v6M14 1v6l4 3-4 3v6" {...line} /><path d="M8 1h5v18H8z" opacity=".7" /></Ic></button>
      <button className="ml-[338px] h-[26px] w-[392px] rounded border-2 border-[#2b2b2b] bg-[#1f1f1f] leading-none text-[#8f8f8f]">Schalter/Modi</button>
    </div>
  </div>
);

const TimeColumn = () => (
  <div className="relative flex min-w-0 flex-1 flex-col overflow-hidden pt-[7px]">
    <div className="flex h-[18px] shrink-0 gap-[2px] border-y-2 border-black bg-black">
      <span className="w-[12px] rounded-l-full bg-[#2f8ceb]" />
      <span className="flex-1 bg-[#666]" />
      <span className="w-[11px] rounded-r-full bg-[#2f8ceb]" />
    </div>
    <div className="flex h-[35px] shrink-0 justify-between pl-[14px] pr-[13px] text-[17px] text-[#8f8f8f]">
      {seconds.map(s => (
        <div key={s} className="flex w-0 flex-col items-center">
          <span className="mt-[2px] h-[23px] leading-6">{s}</span>
          <span className="h-[10px] w-[2px] bg-[#8f8f8f]" />
        </div>
      ))}
    </div>
    <div className="flex h-7 shrink-0 gap-[2px] border-b border-black pl-[3px] pr-[2px]">
      <span className="w-[9px] rounded-l-md bg-[#2f8ceb]" />
      <span className="flex-1 bg-[#5e5e5e]" />
      <span className="w-[9px] rounded-r-md bg-[#2f8ceb]" />
    </div>
    <div className="flex h-[7px] shrink-0 border-b-2 border-black pl-[29px] pr-[13px]"><span className="h-[5px] flex-1 bg-[#20b52c]" /></div>
    <div className="h-[27px] shrink-0 bg-[#484848] pl-[14px] pr-[13px]">
      <div className="h-full border-t-2 border-[#a9d6b8] bg-linear-to-b from-[#a5a1c4] to-[#8583ad]" />
    </div>
    <div className="h-[31px] shrink-0 border-y border-[#1e1e1e] bg-[#262626] pl-[14px] pr-[13px]">
      <div className="flex h-full items-center bg-[#343434] pt-1 text-[#b4b4b4]">
        <svg width="110" height="18" viewBox="0 0 110 18" overflow="visible" fill="currentColor" aria-hidden="true">
          <path d="M0 1l7 8-7 8z" />
          <path d="M0 1l-7 8 7 8z" fill="#7c7c7c" />
          <path d="M18.500 1l8 8-8 8-8-8zM36.500 1l7 8-7 8-7-8zM54.500 1l7 8-7 8-7-8z" />
          <circle cx="80" cy="9" r="8" /><circle cx="92" cy="9" r="8" />
        </svg>
      </div>
    </div>
    <div className="min-h-0 flex-1 bg-[#262626] pl-[14px] pr-[13px]"><div className="h-full bg-[#313131]" /></div>
    <div className="flex h-[30px] shrink-0 items-center text-[#b4b4b4]">
      <button aria-label="Auszoomen" className="ml-[10px]"><Ic w={17} h={8}><path d="M0 8l4-5 2 2 5-5 6 8z" /></Ic></button>
      <input
        type="range"
        aria-label="Zeitzoom"
        defaultValue={0}
        className="ml-[18px] h-[18px] w-[84px] appearance-none bg-[linear-gradient(#484848,#484848)] bg-[length:100%_4px] bg-center bg-no-repeat [&::-webkit-slider-thumb]:h-[18px] [&::-webkit-slider-thumb]:w-[18px] [&::-webkit-slider-thumb]:appearance-none [&::-webkit-slider-thumb]:rounded-full [&::-webkit-slider-thumb]:border-[3px] [&::-webkit-slider-thumb]:border-[#9a9a9a] [&::-webkit-slider-thumb]:bg-[#232323]"
      />
      <button aria-label="Einzoomen" className="ml-[21px]"><Ic w={29} h={13}><path d="M0 13L9 2l2 3-6 8zM8 13L18 0l11 13z" /></Ic></button>
    </div>
    <div className="absolute bottom-[30px] left-[13px] top-[34px] w-[2px] bg-[#2f8ceb]">
      <svg width="22" height="24" viewBox="0 0 22 24" className="absolute -left-[10px] top-0" aria-hidden="true">
        <path d="M0 0h22v10l-9 14h-4L0 10z" fill="#2f8ceb" />
        <path d="M11 12v12" stroke="#1c4a80" />
      </svg>
    </div>
  </div>
);

const Timeline = () => (
  <section className="flex h-[433px] shrink-0 flex-col border border-[#3078bd] bg-[#232323] text-[#8f8f8f]">
    <div className="flex h-[50px] shrink-0 whitespace-nowrap pl-[45px] leading-[50px]">
      <button className="flex w-[207px] items-center gap-[21px]"><Square className="bg-[#a99776]" />Komp 1</button>
      <button className="w-[194px] text-left">Renderliste</button>
      <button className="flex w-[176px] items-center gap-[21px]"><Square className="bg-[#a99776]" />Komp 2</button>
      <div className="flex h-[45px] w-[368px] items-center border-b-[3px] border-[#b8b8b8] pt-[6px]">
        <button aria-label="Schließen"><Ic w={10} h={10}><path d="M1 1l8 8M9 1L1 9" {...line} strokeWidth={1.500} /></Ic></button>
        <Square className="ml-4 bg-[#a99776]" />
        <span className="ml-[21px] text-[#bdbdbd]">Ebene 1/blauer-kreis.ai Komp 1</span>
        <span className="ml-auto"><Burger /></span>
      </div>
    </div>
    <div className="flex min-h-0 flex-1">
      <LayerColumn />
      <TimeColumn />
      <div className="flex w-[27px] shrink-0 flex-col items-end gap-3 pt-[62px] text-[#b4b4b4]">
        <Ic w={20} h={25}><path d="M0 0h20v16L10 25 0 16z" /></Ic>
        <Ic w={26} h={22}><path d="M13 4h13v13H13z" /><path d="M12 1L1 13h11z" fill="#232323" stroke="currentColor" strokeWidth="2" /><circle cx="12" cy="15" r="5" fill="#232323" stroke="currentColor" strokeWidth="2" /></Ic>
      </div>
    </div>
  </section>
);

/* ---------- hand-drawn marks ---------- */

type Pt = [number, number];

const smooth = (p: Pt[]) =>
  p.slice(1).reduce((d, cur, i) => {
    const prev = p[i];
    const before = p[i - 1] ?? prev;
    const after = p[i + 2] ?? cur;
    return `${d}C${prev[0] + (cur[0] - before[0]) / 6} ${prev[1] + (cur[1] - before[1]) / 6} ${cur[0] - (after[0] - prev[0]) / 6} ${cur[1] - (after[1] - prev[1]) / 6} ${cur[0]} ${cur[1]}`;
  }, `M${p[0][0]} ${p[0][1]}`);

const strokes: Pt[][] = [
  [[1880, 884], [1900, 884], [1916, 884], [1923, 887], [1927, 891], [1938, 900], [1968, 930], [1980, 939], [1995, 955], [2002, 967], [2008, 973], [2020, 992], [2024, 1003], [2024, 1023], [2017, 1048], [1998, 1066], [1988, 1069], [1960, 1069], [1930, 1069], [1922, 1067], [1910, 1065], [1880, 1054], [1840, 1037], [1813, 1027], [1807, 1023], [1800, 1010], [1796, 987], [1796, 973], [1799, 947], [1799, 917], [1803, 900], [1810, 895], [1820, 892], [1837, 891], [1888, 892]],
  [[1889, 1021], [1885, 1024], [1867, 1026], [1810, 1025], [1782, 1021], [1750, 1021], [1704, 1021], [1692, 1024], [1660, 1024], [1625, 1025], [1597, 1031], [1550, 1045], [1500, 1070], [1431, 1101], [1340, 1150], [1256, 1201], [1178, 1260], [1108, 1302], [1069, 1323], [996, 1352], [962, 1363], [909, 1377], [851, 1398], [797, 1422], [759, 1442], [720, 1462], [698, 1482], [676, 1499], [664, 1503]],
  [[536, 1478], [560, 1477], [585, 1477], [597, 1481], [620, 1488], [643, 1498], [651, 1507], [652, 1530], [643, 1548], [637, 1573], [631, 1587], [626, 1591], [603, 1592], [568, 1591], [534, 1584], [488, 1573], [442, 1566], [407, 1553], [396, 1538], [392, 1527], [391, 1508], [402, 1493], [422, 1486], [448, 1485], [565, 1485]],
];

const Marks = () => (
  <svg viewBox="0 0 2736 1758" preserveAspectRatio="none" className="pointer-events-none absolute inset-0 h-full w-full" aria-hidden="true">
    {strokes.map((s, i) => <path key={i} d={smooth(s)} fill="none" stroke="#ea0f0f" strokeWidth="4" strokeLinecap="round" />)}
  </svg>
);

export default function App() {
  return (
    <div className="relative flex h-screen w-full flex-col overflow-hidden bg-[#161616] font-['Noto_Sans',sans-serif] text-[18px] leading-6">
      <TitleBar />
      <Toolbar />
      <main className="mx-[2px] mt-1 flex min-h-0 flex-1 gap-2">
        <ProjectPanel />
        <CompPanel />
        <SidePanel />
      </main>
      <div className="mx-[2px] mt-2"><Timeline /></div>
      <div className="flex h-[6px] shrink-0 items-end bg-[#0c0c0c] pl-[956px]">
        <span className="h-1 w-[86px] bg-[#a85420]" />
        <span className="h-1 w-[86px] bg-[#3a3a3a]" />
      </div>
      <Marks />
    </div>
  );
}
